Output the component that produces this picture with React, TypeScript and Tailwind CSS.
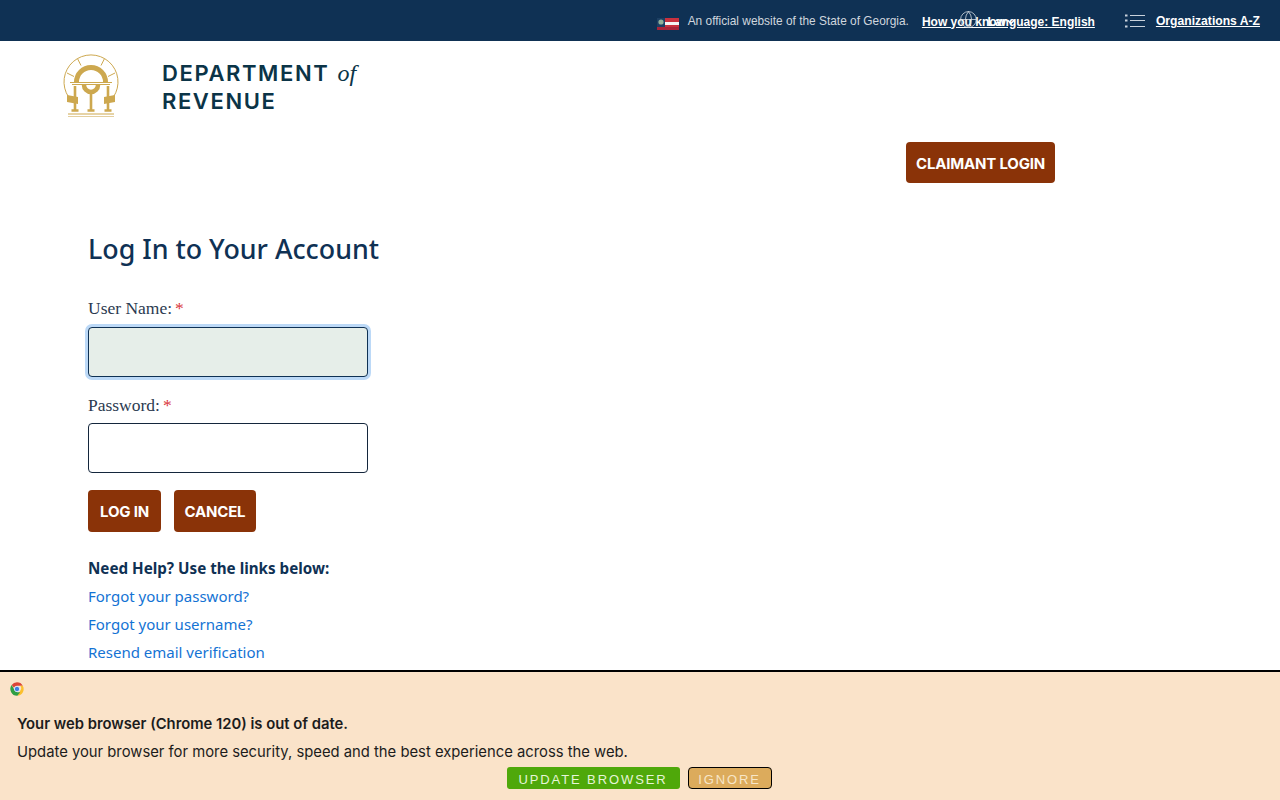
import {Globe, ChevronDown} from 'lucide-react';

const btn = "flex items-center justify-center rounded-[4px] bg-[#8a3308] pt-[3px] font-['Inter',sans-serif] text-[15px] font-bold tracking-[-0.2px] text-white";

function Flag() {
  return (
    <svg width="22" height="14" viewBox="0 0 22 14" className="mr-[9px] mt-[4px]">
      <rect x="0" y="0" width="22" height="14" fill="#fff" />
      <rect x="8" y="2" width="14" height="4" fill="#c8313e" />
      <rect x="8" y="6" width="14" height="3" fill="#f4f4f4" />
      <rect x="8" y="9" width="14" height="3" fill="#c8313e" />
      <rect x="0" y="0" width="22" height="2" fill="#0f3154" />
      <rect x="0" y="2" width="8" height="9" fill="#1c3f63" />
      <circle cx="4" cy="6" r="2.6" fill="#8fb09a" />
      <rect x="0" y="11" width="22" height="3" fill="#a8243a" />
    </svg>
  );
}

function ListIcon() {
  return (
    <svg width="20" height="14" viewBox="0 0 20 14" fill="none" stroke="#c9d2dc" strokeWidth="1">
      <path d="M5 1.5h15M5 6.5h15M5 12.5h15" />
      <path d="M0 1.5h2.5M0 6.5h2.5M0 12.5h2.5" strokeWidth="2" />
    </svg>
  );
}

function Seal() {
  return (
    <svg width="58" height="64" viewBox="0 0 58 64" fill="none" stroke="#cda84f">
      {/* anel externo */}
      <path d="M6.6 43 A27 27 0 1 1 51.4 43" strokeWidth="1" />
      <path d="M15.7 5 L19 11.5 M42.3 5 L39 11.5 M5 19 L12 22.5 M53 19 L46 22.5" strokeWidth="1" />
      {/* arco */}
      <path d="M14.5 28 A14.5 14.5 0 0 1 43.5 28" strokeWidth="5" />
      {/* entablamento */}
      <path d="M8 28.5h42" strokeWidth="1" />
      <path d="M10 30.5h38" strokeWidth="1" />
      {/* arco interno */}
      <path d="M22 31 A7 7 0 0 0 36 31" strokeWidth="4.5" />
      {/* colunas */}
      <path d="M13 32v24M29 38v18M46 32v24" strokeWidth="2.6" />
      {/* faixas */}
      <path d="M5 41l11 2v7l-11-2z M53 41l-11 2v7l11-2z" fill="#cda84f" stroke="none" />
      {/* bases */}
      <path d="M9.5 56.5h7M25.5 56.5h7M42.5 56.5h7" strokeWidth="2.5" />
      <path d="M6 60h46" strokeWidth="1.2" />
      <path d="M6 62.5h46" strokeWidth="1.2" opacity="0.55" />
    </svg>
  );
}

function ChromeIcon() {
  return (
    <svg width="16" height="16" viewBox="0 0 48 48">
      <path d="M24 4a20 20 0 0 1 17.3 10H24a10 10 0 0 0-9.2 6L8 12.2A20 20 0 0 1 24 4z" fill="#db4437" />
      <path d="M41.3 14A20 20 0 0 1 25 44l8.6-15A10 10 0 0 0 33 14z" fill="#fbc02d" />
      <path d="M8 12.2l8.6 15A10 10 0 0 0 25 34h8.6L25 44A20 20 0 0 1 8 12.2z" fill="#2f9e44" />
      <circle cx="24" cy="24" r="8" fill="#3f7fe0" stroke="#fff" strokeWidth="2" />
    </svg>
  );
}

export default function App() {
  return (
    <div className="relative h-screen overflow-hidden bg-white">
      {/* Barra superior */}
      <div className="flex h-[41px] items-center justify-end bg-[#0f3154] pr-5 font-['Liberation_Sans',sans-serif] text-[12px] text-white">
        <Flag />
        <span className="mr-[13px] pt-[2px] text-[11.9px] text-[#cfd6de]">An official website of the State of Georgia.</span>
        {/* Os dois links se sobrepõem na página original */}
        <div className="relative mr-[30px] h-[16px] w-[173px]">
          <a className="absolute left-0 top-0 whitespace-nowrap font-semibold underline">How you know</a>
          <Globe size={19} strokeWidth={1} className="absolute left-[37px] top-[-3px] text-[#d5dbe2]" />
          <a className="absolute right-0 top-0 whitespace-nowrap font-semibold underline">Language: English</a>
          <ChevronDown size={12} strokeWidth={3} className="absolute left-[83px] top-[3px]" />
        </div>
        <ListIcon />
        <a className="ml-[11px] pt-[2px] text-[12.15px] font-semibold underline">Organizations A-Z</a>
      </div>

      {/* Logo */}
      <div className="flex h-[101px] items-start pl-[62px] pt-[13px]">
        <Seal />
        <div className="ml-[42px] pt-[5px] font-['Inter',sans-serif] text-[22px] font-semibold leading-[28px] tracking-[1.6px] text-[#0b3447]">
          <div>
            DEPARTMENT <i className="ml-[1px] font-['Liberation_Serif',serif] text-[24px] font-normal tracking-normal text-[#0b3447]">of</i>
          </div>
          <div>REVENUE</div>
        </div>
      </div>

      <div className="flex justify-end pr-[225px]">
        <a className={`${btn} h-[41px] w-[149px]`}>CLAIMANT LOGIN</a>
      </div>

      {/* Formulário */}
      <div className="pl-[88px] pt-[46px]">
        <h1 className="whitespace-nowrap font-['Noto_Sans',sans-serif] text-[26.8px] font-medium leading-[40px] text-[#0f3154]">Log In to Your Account</h1>

        <label className="mt-[27px] block font-['Liberation_Serif',serif] text-[17.5px] leading-[24px] text-[#2b3a50]">
          User Name:<span className="ml-[3px] text-[#d9343a]">*</span>
        </label>
        <input className="mt-[7px] block h-[50px] w-[280px] rounded-[4px] border border-[#0f3154] bg-[#e6eee9] shadow-[0_0_0_3px_#bcd9f7] outline-none" />

        <label className="mt-[16px] block font-['Liberation_Serif',serif] text-[17.5px] leading-[24px] text-[#2b3a50]">
          Password:<span className="ml-[3px] text-[#d9343a]">*</span>
        </label>
        <input type="password" className="mt-[6px] block h-[50px] w-[280px] rounded-[4px] border border-[#14263c] bg-white outline-none" />

        <div className="mt-[17px] flex gap-[13px]">
          <button className={`${btn} h-[42px] w-[73px]`}>LOG IN</button>
          <button className={`${btn} h-[42px] w-[82px]`}>CANCEL</button>
        </div>

        <div className="mt-[22px] font-['Noto_Sans',sans-serif] text-[15px] leading-[28px]">
          <div className="text-[15.2px] font-bold text-[#0f3154]">Need Help? Use the links below:</div>
          <a className="block text-[#1473d4]">Forgot your password?</a>
          <a className="block text-[#1473d4]">Forgot your username?</a>
          <a className="block text-[#1473d4]">Resend email verification</a>
        </div>
      </div>

      {/* Aviso de navegador desatualizado */}
      <div className="absolute inset-x-0 bottom-0 h-[130px] border-t-2 border-black bg-[#fae3c9] pl-[9px] pt-[9px] font-['Inter',sans-serif] text-[14.8px] text-[#1c1c1c]">
        <ChromeIcon />
        <div className="ml-[8px] mt-[13px] font-semibold leading-[28px]">Your web browser (Chrome 120) is out of date.</div>
        <div className="ml-[8px] leading-[28px]">Update your browser for more security, speed and the best experience across the web.</div>
        <div className="absolute bottom-[11px] left-0 right-0 flex justify-center gap-2 pr-[2px] font-['Liberation_Sans',sans-serif] text-[13px] tracking-[1.9px]">
          <a className="flex h-[22px] w-[173px] items-center justify-center rounded-[3px] bg-[#4fa80a] pt-[4px] text-[#e6f5d8]">UPDATE BROWSER</a>
          <a className="flex h-[22px] w-[84px] items-center justify-center rounded-[4px] border border-black bg-[#dcab5c] pt-[4px] text-[#f7e6c8]">IGNORE</a>
        </div>
      </div>
    </div>
  );
}
